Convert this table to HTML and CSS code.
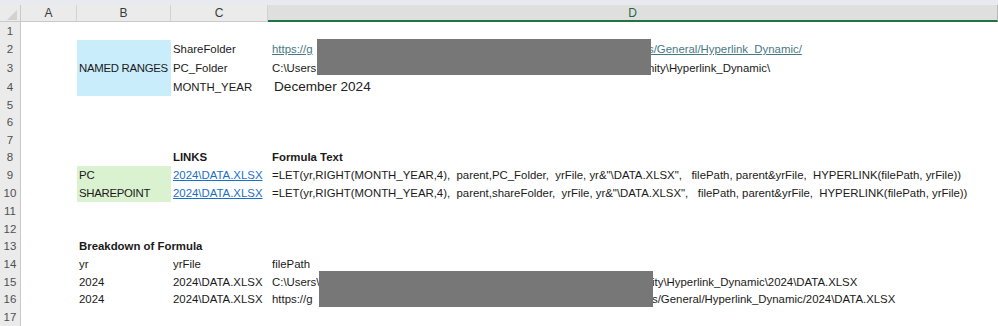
FILE: index.html
```html
<!DOCTYPE html>
<html lang="en">
<head>
<meta charset="utf-8">
<title>Hyperlink Dynamic</title>
<link rel="stylesheet" href="styles.css">
</head>
<body>
<div class="topband"></div>
<div class="sheet">
  <div class="grid">
    <div class="corner"><svg width="20" height="17" viewBox="0 0 20 17"><polygon points="17,5 17,15 7,15" fill="#d2d2d2"/></svg></div>
    <div class="colhead">A</div>
    <div class="colhead">B</div>
    <div class="colhead">C</div>
    <div class="colhead sel">D</div>

    <div class="rh">1</div><div class="c"></div><div class="c"></div><div class="c"></div><div class="c"></div>

    <div class="rh">2</div><div class="c"></div>
    <div class="c b merged blue caps">NAMED RANGES</div>
    <div class="c cc">ShareFolder</div>
    <div class="c d"><span class="pre link">https://g</span><span class="link">s/General/Hyperlink_Dynamic/</span></div>

    <div class="rh">3</div><div class="c"></div>
    <div class="c cc">PC_Folder</div>
    <div class="c d"><span class="pre">C:\Users</span><span>nity\Hyperlink_Dynamic\</span></div>

    <div class="rh">4</div><div class="c"></div>
    <div class="c cc">MONTH_YEAR</div>
    <div class="c d big">December 2024</div>

    <div class="rh">5</div><div class="c"></div><div class="c"></div><div class="c"></div><div class="c"></div>
    <div class="rh">6</div><div class="c"></div><div class="c"></div><div class="c"></div><div class="c"></div>
    <div class="rh">7</div><div class="c"></div><div class="c"></div><div class="c"></div><div class="c"></div>

    <div class="rh">8</div><div class="c"></div><div class="c"></div>
    <div class="c cc bold">LINKS</div>
    <div class="c d bold">Formula Text</div>

    <div class="rh">9</div><div class="c"></div>
    <div class="c b green">PC</div>
    <div class="c cc"><span class="link2">2024\DATA.XLSX</span></div>
    <div class="c d">=LET(yr,RIGHT(MONTH_YEAR,4),  parent,PC_Folder,  yrFile, yr&amp;"\DATA.XLSX",   filePath, parent&amp;yrFile,  HYPERLINK(filePath, yrFile))</div>

    <div class="rh">10</div><div class="c"></div>
    <div class="c b green caps">SHAREPOINT</div>
    <div class="c cc"><span class="link2">2024\DATA.XLSX</span></div>
    <div class="c d">=LET(yr,RIGHT(MONTH_YEAR,4),  parent,shareFolder,  yrFile, yr&amp;"\DATA.XLSX",   filePath, parent&amp;yrFile,  HYPERLINK(filePath, yrFile))</div>

    <div class="rh">11</div><div class="c"></div><div class="c"></div><div class="c"></div><div class="c"></div>
    <div class="rh">12</div><div class="c"></div><div class="c"></div><div class="c"></div><div class="c"></div>

    <div class="rh">13</div><div class="c"></div>
    <div class="c b bold">Breakdown of Formula</div>
    <div class="c"></div><div class="c"></div>

    <div class="rh">14</div><div class="c"></div>
    <div class="c b">yr</div>
    <div class="c cc">yrFile</div>
    <div class="c d">filePath</div>

    <div class="rh">15</div><div class="c"></div>
    <div class="c b">2024</div>
    <div class="c cc">2024\DATA.XLSX</div>
    <div class="c d"><span class="pre pre2">C:\Users\</span><span>ity\Hyperlink_Dynamic\2024\DATA.XLSX</span></div>

    <div class="rh">16</div><div class="c"></div>
    <div class="c b">2024</div>
    <div class="c cc">2024\DATA.XLSX</div>
    <div class="c d"><span class="pre pre2">https://g</span><span>s/General/Hyperlink_Dynamic/2024\DATA.XLSX</span></div>

    <div class="rh">17</div><div class="c"></div><div class="c"></div><div class="c"></div><div class="c"></div>
  </div>
  <div class="redact r1"></div>
  <div class="redact r2"></div>
</div>
</body>
</html>
```
FILE: styles.css
```css
html, body {
  margin: 0;
  padding: 0;
  background: #ffffff;
}
body {
  width: 998px;
  height: 326px;
  overflow: hidden;
  font-family: "Liberation Sans", Arial, sans-serif;
  font-size: 11.4px;
  color: #1a1a1a;
}
.topband {
  height: 5px;
  background: #e7ebef;
}
.sheet {
  position: relative;
}
.grid {
  display: grid;
  grid-template-columns: 21px 56px 94px 97px 729px 1px;
  grid-template-rows: 17px 18px 18px 19px 19px 17px 18px 17px 18px 18px 18px 18px 17px 18px 18px 17px 18px 18px;
}
.corner {
  background: #ebebeb;
  border-right: 1px solid #c9c9c9;
  border-bottom: 1px solid #c9c9c9;
  box-sizing: border-box;
  display: flex;
}
.colhead {
  background: #ebebeb;
  border-right: 1px solid #d2d2d2;
  border-bottom: 1px solid #c9c9c9;
  box-sizing: border-box;
  display: flex;
  align-items: center;
  justify-content: center;
  color: #3a3a3a;
  font-size: 12px;
}
.colhead.sel {
  grid-column: 5 / 7;
  background: #dfdfdf;
  color: #1d6b40;
  border-bottom: 2px solid #217346;
  border-right: 1px solid #b8b8b8;
}
.rh {
  grid-column: 1;
  background: #ebebeb;
  border-right: 1px solid #c9c9c9;
  box-sizing: border-box;
  display: flex;
  align-items: center;
  justify-content: center;
  color: #505050;
  font-size: 11.5px;
}
.c {
  display: flex;
  align-items: center;
  white-space: pre;
  overflow: visible;
  min-width: 0;
}
.grid > .rh + .c { grid-column: 2; }
.b { padding-left: 2px; }
.cc { padding-left: 2px; }
.d { padding-left: 4px; grid-column: 5 / 7; }
.caps { letter-spacing: -0.3px; }
.merged { grid-row: span 3; }
.blue { background: #caedfb; }
.green { background: #daf2d0; }
.bold { font-weight: bold; }
.big { font-size: 13.6px; padding-left: 6px; color: #222; }
.pre {
  display: inline-block;
  width: 376px;
  flex: none;
}
.pre2 { width: 380px; }
.link { color: #467886; text-decoration: underline; }
.link2 { color: #1c6fc6; text-decoration: underline; }
.redact {
  position: absolute;
  background: #777777;
  width: 334px;
  height: 36px;
}
.r1 { left: 317px; top: 34px; }
.r2 { left: 319px; top: 266px; }
```
